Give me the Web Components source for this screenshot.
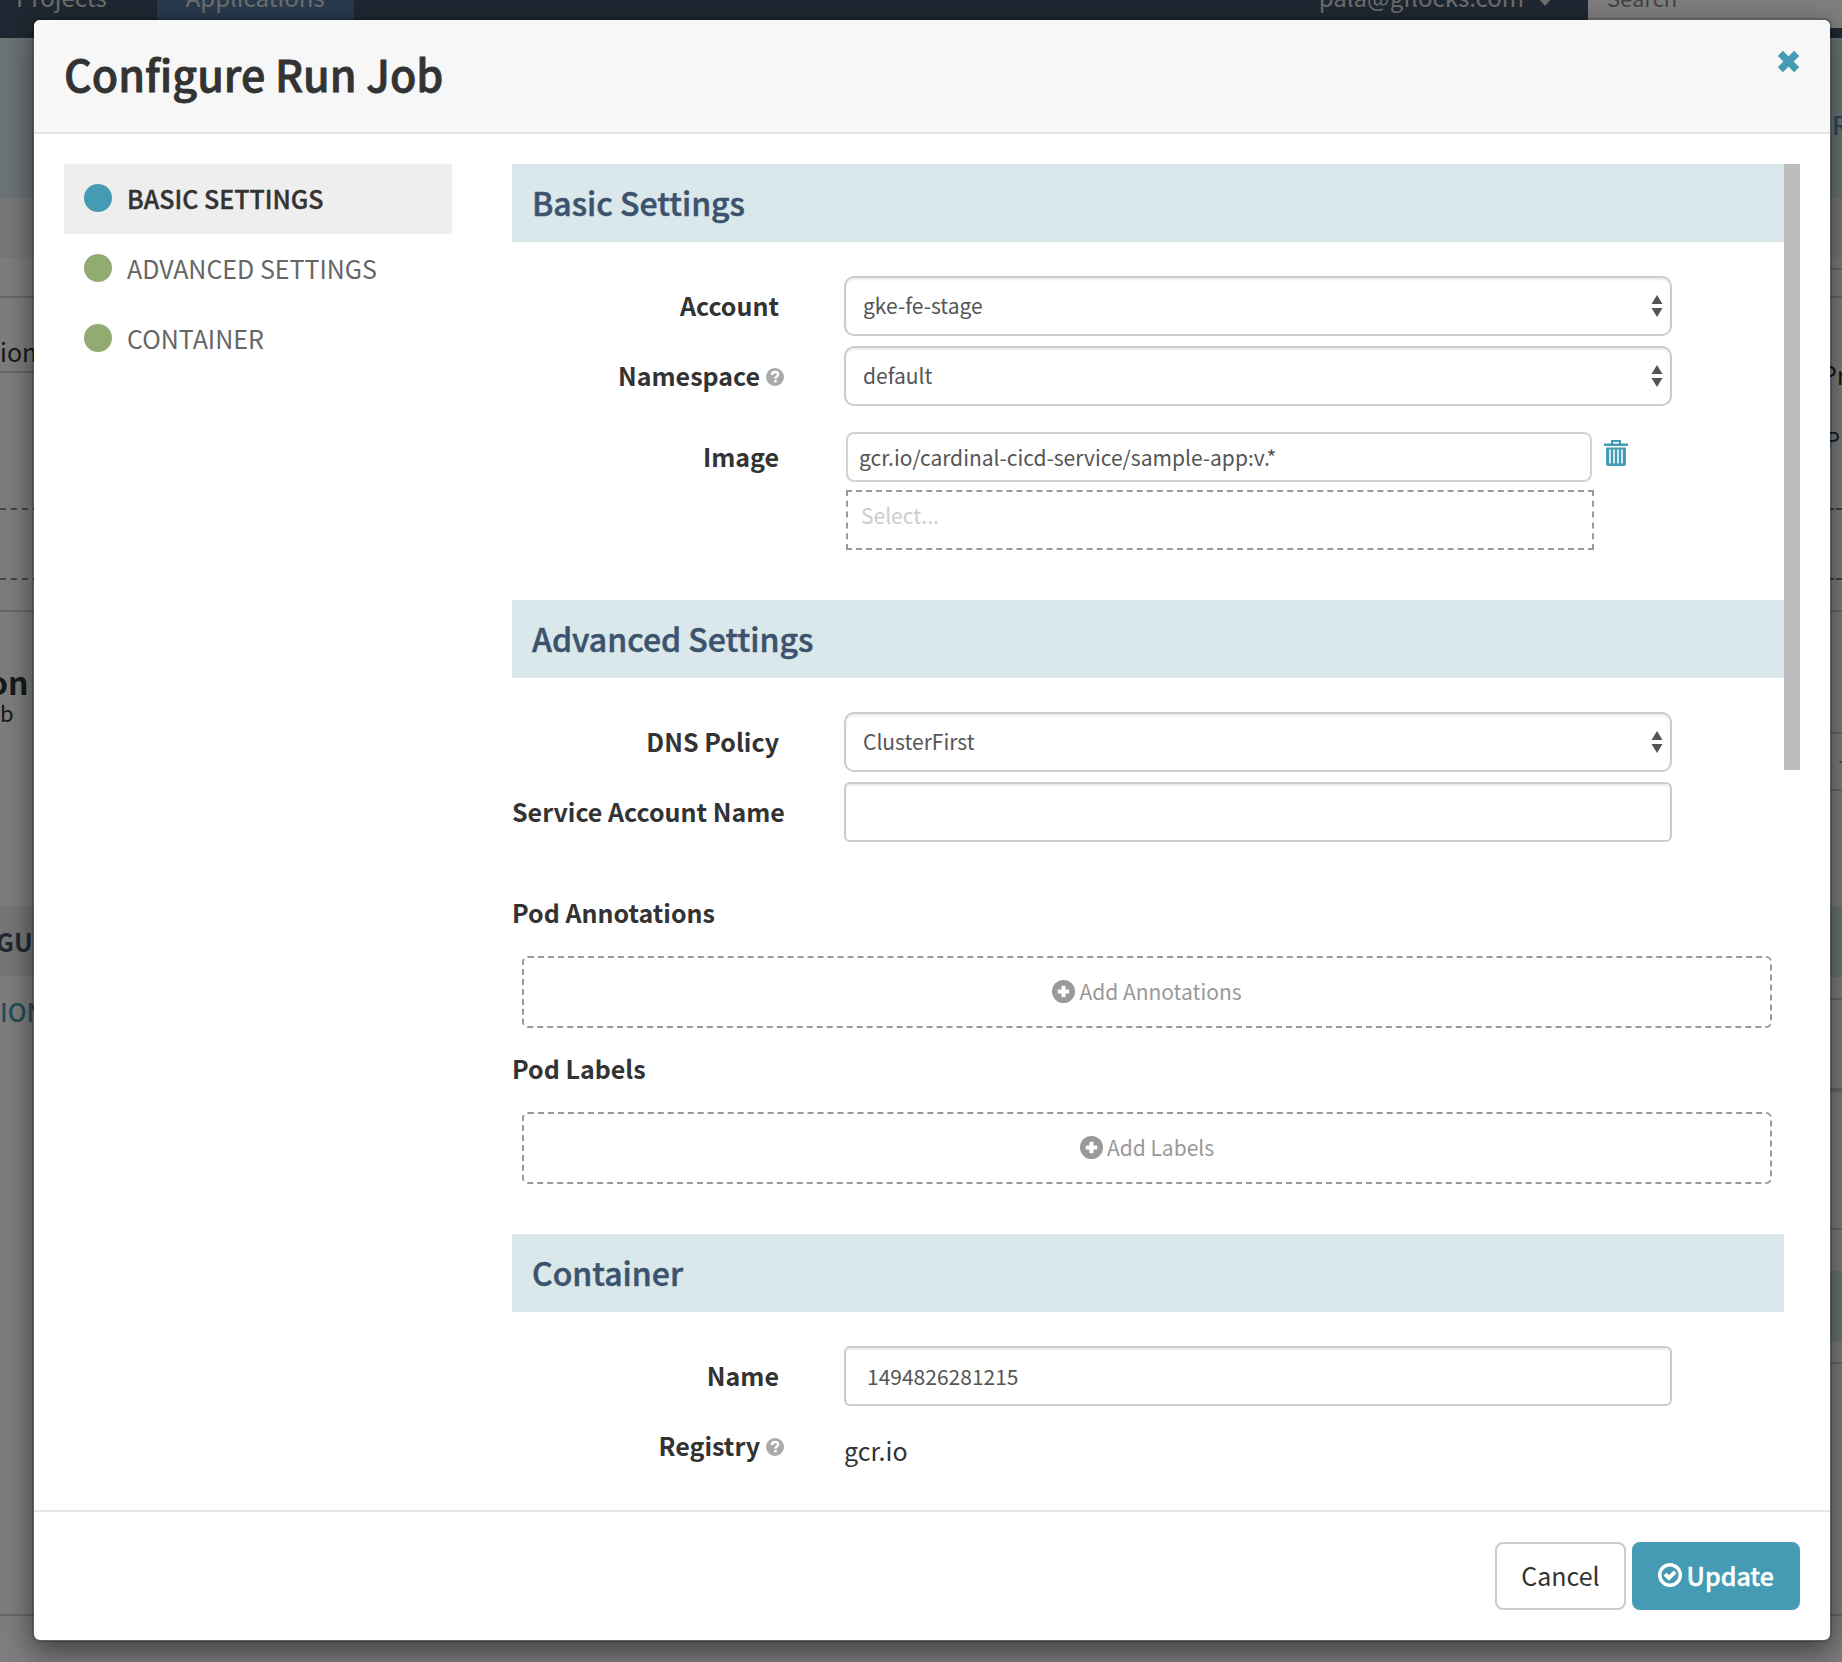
<!DOCTYPE html>
<html lang="en">
<head>
<meta charset="utf-8">
<title>Configure Run Job</title>
<style>
  html, body { margin: 0; }
  body {
    font-family: "Noto Sans CJK SC", "Noto Sans", sans-serif;
    font-size: 25px;
    line-height: 40px;
    color: #333;
    background: #fff;
    overflow: hidden;
  }
</style>
</head>
<body>
<app-backdrop></app-backdrop>
<modal-dialog heading="Configure Run Job">
  <modal-nav slot="nav">
    <nav-step active>Basic Settings</nav-step>
    <nav-step>Advanced Settings</nav-step>
    <nav-step>Container</nav-step>
  </modal-nav>

  <page-section heading="Basic Settings">
    <select-field label="Account" value="gke-fe-stage"></select-field>
    <select-field label="Namespace" value="default" help></select-field>
    <image-field label="Image" value="gcr.io/cardinal-cicd-service/sample-app:v.*"></image-field>
  </page-section>

  <page-section heading="Advanced Settings">
    <select-field label="DNS Policy" value="ClusterFirst"></select-field>
    <text-field label="Service Account Name" value=""></text-field>
    <map-editor lead heading="Pod Annotations" action="Add Annotations"></map-editor>
    <map-editor heading="Pod Labels" action="Add Labels"></map-editor>
  </page-section>

  <page-section heading="Container">
    <text-field label="Name" value="1494826281215"></text-field>
    <static-field label="Registry" help>gcr.io</static-field>
  </page-section>

  <action-button slot="footer">Cancel</action-button>
  <action-button slot="footer" primary>Update</action-button>
</modal-dialog>

<script>
const attr = (el, name) => el.getAttribute(name) || '';

class BaseElement extends HTMLElement {
  connectedCallback() {
    if (this.shadowRoot) return;
    this.attachShadow({ mode: 'open' }).innerHTML =
      `<style>*{box-sizing:border-box}${this.css()}</style>${this.html()}`;
  }
  css() { return ''; }
  html() { return '<slot></slot>'; }
}

const ICONS = {
  close: ['0 0 24 24', '<path fill="none" stroke="currentColor" stroke-width="7.500" stroke-linejoin="round" d="M3.500 3.500l17 17M20.500 3.500l-17 17"/>'],
  help: ['0 0 18 18', '<circle cx="9" cy="9" r="9" fill="currentColor"/><path fill="none" stroke="#fff" stroke-width="2.400" d="M6 7c0-2 1.300-3 3.100-3 1.900 0 3 1.100 3 2.500 0 2-2.700 1.900-2.700 4.200"/><rect x="8.100" y="12" width="2.600" height="2.400" fill="#fff"/>'],
  plus: ['0 0 24 24', '<circle cx="12" cy="12" r="12" fill="currentColor"/><path fill="#fff" d="M10.500 6h3q.6 0 .6.600v3.300h3.300q.6 0 .6.600v3q0 .6-.6.600h-3.300v3.300q0 .6-.6.600h-3q-.6 0-.6-.6v-3.300H6.600q-.6 0-.6-.6v-3q0-.6.6-.6h3.300V6.600q0-.6.600-.6z"/>'],
  check: ['0 0 24 24', '<circle cx="12" cy="12" r="10.300" fill="none" stroke="currentColor" stroke-width="3.400"/><path fill="currentColor" d="M6 12.200l2-2q.5-.5 1 0l2 2 4.200-4.200q.5-.5 1 0l1.800 1.800q.5.500 0 1L11.500 17.200q-.5.500-1 0L6 13.100q-.4-.5 0-.9z"/>'],
  trash: ['0 0 24 26', '<path fill="none" stroke="currentColor" stroke-width="2" d="M8 4V1h8v3"/><path fill="currentColor" d="M0 3.500h24V6H0zM2 7.500h20V24q0 2-2 2H4q-2 0-2-2z"/><path stroke="#fff" stroke-width="1.500" d="M6 9.500V23.500M10 9.500V23.500M14 9.500V23.500M18 9.500V23.500"/>'],
  sort: ['0 0 12 24', '<path fill="#555" d="M6 1l5.500 9H.5zM6 23L.5 14h11z"/>'],
  caret: ['0 0 14 8', '<path fill="currentColor" d="M0 0h14L7 8z"/>']
};
const icon = (name, w, h) =>
  `<svg class="icon ${name}" width="${w}" height="${h}" viewBox="${ICONS[name][0]}" aria-hidden="true">${ICONS[name][1]}</svg>`;

const FIELD_CSS = `
  :host { display: grid; grid-template-columns: 272px minmax(0, 828px); column-gap: 60px; }
  label, .label {
    font-weight: 700; font-size: 25px; line-height: 58px;
    text-align: right; white-space: nowrap; padding-right: 5px; color: #333;
  }
  :host([help]) label, :host([help]) .label { padding-right: 0; }
  .help { color: #aaa; margin-left: 6px; vertical-align: 0; }
  select, input {
    width: 100%; height: 60px; margin: 0; padding: 0 17px 2px;
    border: 2px solid #ccc; border-radius: 6px; background: #fff; color: #555;
    font: 400 21px/36px "Noto Sans CJK SC", "Noto Sans", sans-serif;
    box-shadow: inset 0 2px 2px rgba(0,0,0,.08);
    outline: 0; appearance: none;
  }
`;
const labelFor = el =>
  `${attr(el, 'label')}${el.hasAttribute('help') ? icon('help', 18, 18) : ''}`;

customElements.define('select-field', class extends BaseElement {
  css() {
    return FIELD_CSS + `
      .control { display: grid; align-items: center; }
      .control > * { grid-area: 1 / 1; }
      select { border-radius: 10px; }
      .sort { justify-self: end; margin-right: 9px; pointer-events: none; }`;
  }
  html() {
    return `<label for="c">${labelFor(this)}</label>
      <div class="control"><select id="c"><option>${attr(this, 'value')}</option></select>${icon('sort', 12, 24)}</div>`;
  }
});

customElements.define('text-field', class extends BaseElement {
  css() { return FIELD_CSS + 'input { padding: 0 21px; }'; }
  html() {
    return `<label for="c">${labelFor(this)}</label><input id="c" type="text" value="${attr(this, 'value')}">`;
  }
});

customElements.define('static-field', class extends BaseElement {
  css() { return FIELD_CSS + '.value { line-height: 40px; padding-top: 14px; }'; }
  html() { return `<div class="label">${labelFor(this)}</div><div class="value"><slot></slot></div>`; }
});

customElements.define('image-field', class extends BaseElement {
  css() {
    return FIELD_CSS + `
      :host { padding-top: 16px; align-items: start; }
      label { line-height: 48px; }
      .stack { display: flex; flex-direction: column; gap: 8px; padding-left: 2px; }
      .line { display: flex; align-items: center; gap: 12px; }
      .line input { width: 746px; min-width: 0; height: 50px; padding: 0 11px; border-color: #d2d2d2; border-radius: 8px; box-shadow: none; }
      .more { width: 748px; max-width: 100%; padding: 0 13px 10px; border: 2px dashed #999; border-radius: 0; box-shadow: none; }
      .more::placeholder { color: #ccc; opacity: 1; }
      button { display: flex; padding: 0 0 8px; border: 0; background: none; color: #469bb4; }`;
  }
  html() {
    return `<label for="c">${attr(this, 'label')}</label>
      <div class="stack">
        <div class="line"><input id="c" type="text" value="${attr(this, 'value')}"><button type="button" aria-label="Remove image">${icon('trash', 24, 26)}</button></div>
        <input class="more" type="text" placeholder="Select..." aria-label="Add image">
      </div>`;
  }
});

customElements.define('map-editor', class extends BaseElement {
  css() {
    return `
      :host { display: flex; flex-direction: column; gap: 24px; padding-top: 10px; }
      :host([lead]) { padding-top: 40px; }
      h4 { margin: 0; font-size: 25px; line-height: 40px; font-weight: 700; }
      button {
        display: flex; align-items: center; justify-content: center; gap: 4px;
        height: 72px; margin: 0 12px 0 10px; padding: 0 0 2px;
        border: 2px dashed #999; border-radius: 6px; background: none; color: #999;
        font: 400 21px/36px "Noto Sans CJK SC", "Noto Sans", sans-serif;
      }`;
  }
  html() { return `<h4>${attr(this, 'heading')}</h4><button type="button">${icon('plus', 23, 23)}<span>${attr(this, 'action')}</span></button>`; }
});

customElements.define('page-section', class extends BaseElement {
  css() {
    return `
      :host { display: block; margin-bottom: 50px; }
      h2 {
        margin: 0; padding: 0 20px 2px; font-size: 32px; line-height: 76px; font-weight: 500;
        color: #3b536d; background: #dae7eb; -webkit-text-stroke: 0.5px;
      }
      .fields { display: flex; flex-direction: column; gap: 10px; padding-top: 34px; }`;
  }
  html() { return `<h2>${attr(this, 'heading')}</h2><div class="fields"><slot></slot></div>`; }
});

customElements.define('nav-step', class extends BaseElement {
  css() {
    return `
      :host { display: block; }
      a {
        display: flex; align-items: center; gap: 15px; height: 70px; padding: 0 20px 3px;
        color: #666; text-decoration: none; text-transform: uppercase; font-size: 25px;
      }
      i { width: 28px; height: 28px; border-radius: 50%; background: #92ab72; }
      :host([active]) a { background: #eee; color: #333; font-weight: 500; -webkit-text-stroke: 0.4px; }
      :host([active]) i { background: #469bb4; }`;
  }
  html() { return '<a href="#"><i></i><slot></slot></a>'; }
});

customElements.define('modal-nav', class extends BaseElement {
  css() { return ':host { display: flex; flex-direction: column; flex: 0 0 388px; }'; }
});

customElements.define('action-button', class extends BaseElement {
  css() {
    return `
      :host { display: block; }
      button {
        display: flex; align-items: center; justify-content: center; gap: 5px;
        height: 68px; padding: 0 24px 2px; border: 2px solid #ccc; border-radius: 8px;
        background: #fff; color: #333; font: 400 25px/40px "Noto Sans CJK SC", "Noto Sans", sans-serif;
      }
      :host([primary]) button { background: #469bb4; border-color: #469bb4; color: #fff; font-weight: 500; -webkit-text-stroke: 0.4px; }`;
  }
  html() {
    return `<button type="button">${this.hasAttribute('primary') ? icon('check', 24, 24) : ''}<span><slot></slot></span></button>`;
  }
});

customElements.define('modal-dialog', class extends BaseElement {
  css() {
    return `
      :host {
        position: absolute; inset: 0; display: flex;
        padding: 18px 10px 20px 32px; background: rgba(0,0,0,.5);
      }
      .dialog {
        flex: 1; min-width: 0; display: flex; flex-direction: column;
        border: 2px solid rgba(0,0,0,.2); border-radius: 8px; background: #fff; background-clip: padding-box;
        box-shadow: 0 10px 30px rgba(0,0,0,.5);
      }
      header {
        display: flex; align-items: flex-start; justify-content: space-between;
        padding: 23px 30px 29px; border-bottom: 2px solid #e5e5e5; border-radius: 6px 6px 0 0; background: #f7f7f7;
      }
      h1 { margin: 0; font-size: 43px; line-height: 60px; font-weight: 500; -webkit-text-stroke: 0.8px; }
      .x { display: flex; margin: 7px 0 0; padding: 0; border: 0; background: none; color: #469bb4; }
      .body { flex: 1; min-height: 0; display: flex; gap: 60px; padding: 30px 30px 0; overflow: hidden; }
      .content { flex: 1; min-width: 0; overflow: hidden; }
      .scroll { display: flex; flex: 1; min-width: 0; }
      .bar { flex: 0 0 16px; }
      .thumb { height: 45%; background: #bdbdbd; }
      footer { display: flex; justify-content: flex-end; gap: 6px; padding: 30px; border-top: 2px solid #e5e5e5; }`;
  }
  html() {
    return `<div class="dialog" role="dialog" aria-modal="true">
      <header><h1>${attr(this, 'heading')}</h1><button class="x" type="button" aria-label="Close">${icon('close', 23, 23)}</button></header>
      <div class="body">
        <slot name="nav"></slot>
        <div class="scroll"><div class="content"><slot></slot></div><div class="bar" aria-hidden="true"><div class="thumb"></div></div></div>
      </div>
      <footer><slot name="footer"></slot></footer>
    </div>`;
  }
});

customElements.define('app-topbar', class extends BaseElement {
  css() {
    return `
      :host { display: flex; height: 38px; background: #3f5164; overflow: hidden; font-size: 24px; line-height: 40px; }
      a { display: block; height: 38px; color: #ddd; text-decoration: none; }
      span { display: block; margin-top: -23px; }
      .first { padding: 0 50px 0 16px; }
      .tab { padding: 0 29px; background: #53779f; }
      .user { display: flex; gap: 14px; margin-left: auto; padding-right: 36px; }
      .user svg { margin-top: -2px; }
      .search { width: 254px; height: 28px; padding-left: 19px; background: #fff; color: #888; font-size: 22px; }`;
  }
  html() {
    return `<a class="first" href="#"><span>Projects</span></a><a class="tab" href="#"><span>Applications</span></a>
      <a class="user" href="#"><span>pala@gflocks.com</span>${icon('caret', 14, 8)}</a><div class="search"><span>Search</span></div>`;
  }
});

/* Each column is a run of rows: [height, classes, content] */
const LEFT = [
  [160, 'band', ''], [60, 'grey', ''], [40, 'line', ''], [75, 'line end', 'ion'],
  [137, 'dash', ''], [70, 'dash', ''], [32, 'line', ''],
  [89, 'big end', 'on'], [31, 'small end', 'b'], [174, '', ''],
  [70, 'grey strong', 'GU'], [70, 'link strong', 'ION'], [570, 'line', ''], [46, '', '']
];
const RIGHT = [
  [160, 'band link action end', 'R'], [60, 'grey', ''], [12, 'line', ''], [28, 'line', ''],
  [96, 'end', 'Pr'], [64, 'small inset end', 'P'], [52, 'dash', ''], [70, 'dash', ''], [32, 'line', ''],
  [122, 'line', ''], [57, 'line far', icon('caret', 14, 8)], [115, '', ''], [71, 'band', ''], [23, 'line', ''],
  [92, 'line thick', ''], [138, 'line', ''], [41, '', ''], [71, 'band', ''], [22, 'line', ''], [252, 'line', ''], [46, '', '']
];
customElements.define('app-backdrop', class extends BaseElement {
  css() {
    return `
      :host { display: block; height: 100vh; overflow: hidden; background: #fdfdfd; }
      .cols { display: flex; justify-content: space-between; }
      .left { flex: 0 0 50px; overflow: hidden; } .right { flex: 0 0 21px; overflow: hidden; }
      .row { display: flex; align-items: center; white-space: nowrap; color: #333; }
      .band { background: #d9e8ea; } .grey { background: #f2f2f2; }
      .line { border-bottom: 2px solid #d0d0d0; } .thick { border-bottom-width: 4px; }
      .dash { border-bottom: 2px dashed #888; }
      .big { font-size: 32px; font-weight: 700; text-indent: -12px; } .small { font-size: 22px; }
      .strong { font-weight: 700; color: #3f5164; } .strong.grey { text-indent: -4px; background: #ececec; }
      .row.link { color: #469bb4; font-weight: 500; }
      .end { align-items: flex-end; }
      .action { padding: 0 0 54px 11px; } .inset { padding-left: 5px; } .far { padding-left: 18px; }`;
  }
  col(rows) {
    return rows.map(([h, c, t]) => `<div class="row ${c}" style="height:${h}px">${t}</div>`).join('');
  }
  html() {
    return `<app-topbar></app-topbar><div class="cols"><div class="left">${this.col(LEFT)}</div><div class="right">${this.col(RIGHT)}</div></div>`;
  }
});
</script>
</body>
</html>
